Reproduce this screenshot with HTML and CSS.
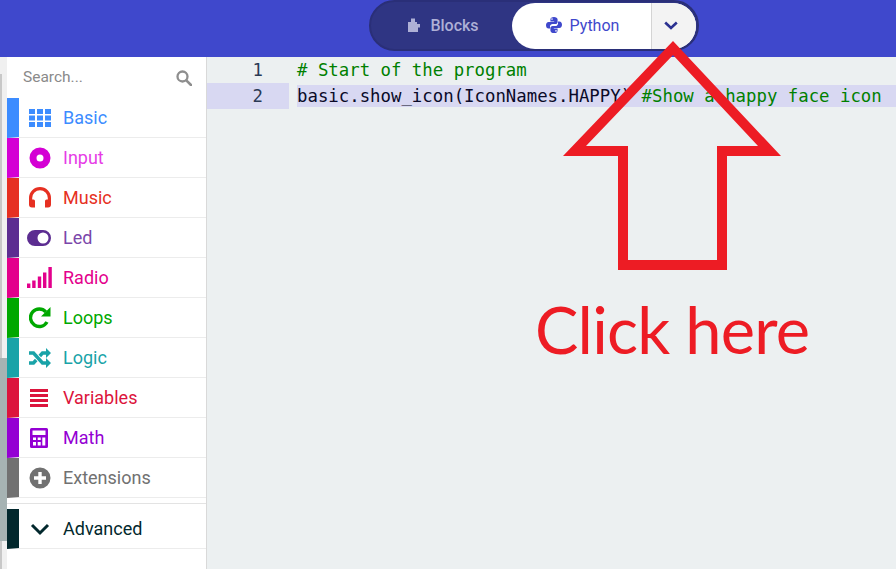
FILE: index.html
```html
<!DOCTYPE html>
<html lang="en">
<head>
<meta charset="utf-8">
<title>MakeCode Python</title>
<link rel="stylesheet" href="styles.css">
</head>
<body>
<header class="topbar">
  <div class="toggle">
    <div class="tab tab-blocks">
      <svg class="tab-icon" viewBox="0 0 12 14"><path d="M3 0.500h4v3.500h2V6H12v3.500h-2V14H0V4h3z" fill="currentColor"/></svg>
      <span>Blocks</span>
    </div>
    <div class="active-group">
      <div class="tab tab-python">
        <svg class="tab-icon" viewBox="0 0 16 16"><path d="M8 0C5.500 0 4.400 1 4.400 2.600V4.500H8.200V5H2.600C1 5 0 6.300 0 8.200c0 2 1 3.300 2.600 3.300H4V9.600c0-1.500 1.200-2.600 2.600-2.600h2.900c1.200 0 2.100-1 2.100-2.100V2.600C11.600 1 10 0 8 0zM6 1.300a.8.8 0 1 1 0 1.600.8.8 0 0 1 0-1.600z" fill="currentColor"/><path d="M8 16c2.500 0 3.600-1 3.600-2.600v-1.900H7.800V11h5.600C15 11 16 9.700 16 7.800c0-2-1-3.300-2.600-3.300H12v1.900c0 1.500-1.200 2.600-2.600 2.600H6.500c-1.200 0-2.100 1-2.100 2.100v2.300C4.400 15 6 16 8 16zm2-1.300a.8.8 0 1 1 0-1.600.8.8 0 0 1 0 1.600z" fill="currentColor"/></svg>
        <span>Python</span>
      </div>
      <div class="tab-menu">
        <svg class="chevron" viewBox="0 0 14 9"><path d="M1.200 1.500 7 7l5.800-5.500" fill="none" stroke="currentColor" stroke-width="2.600"/></svg>
      </div>
    </div>
  </div>
</header>
<main class="workspace">
  <div class="gutter"></div>
  <aside class="toolbox">
    <div class="search">
      <span>Search...</span>
      <svg class="search-icon" viewBox="0 0 16 16"><circle cx="6.500" cy="6.500" r="5" fill="none" stroke="currentColor" stroke-width="2.300"/><path d="m10.300 10.300 4.700 4.700" stroke="currentColor" stroke-width="2.600" stroke-linecap="round"/></svg>
    </div>
    <ul class="cats">
      <li class="cat basic"><svg viewBox="0 0 22 18"><path d="M0 0h6v5H0zM8 0h6v5H8zM16 0h6v5h-6zM0 6.500h6v5H0zM8 6.500h6v5H8zM16 6.500h6v5h-6zM0 13h6v5H0zM8 13h6v5H8zM16 13h6v5h-6z" fill="currentColor"/></svg><span>Basic</span></li>
      <li class="cat input"><svg viewBox="0 0 22 22"><path fill-rule="evenodd" d="M11 0.500a10.500 10.500 0 1 1 0 21 10.500 10.500 0 0 1 0-21zm0 7a3.500 3.500 0 1 0 0 7 3.500 3.500 0 0 0 0-7z" fill="currentColor"/></svg><span>Input</span></li>
      <li class="cat music"><svg viewBox="0 0 22 22"><path d="M0 17v-6a11 11 0 0 1 22 0v6h-3.200v-6a7.800 7.800 0 0 0-15.600 0v6z" fill="currentColor"/><path d="M0 12.500h4.500a1.500 1.500 0 0 1 1.500 1.500V20.500H3a3 3 0 0 1-3-3zM22 12.500h-4.500a1.500 1.500 0 0 0-1.500 1.500V20.500h3a3 3 0 0 0 3-3z" fill="currentColor"/></svg><span>Music</span></li>
      <li class="cat led"><svg viewBox="0 0 24 16"><path fill-rule="evenodd" d="M8 0h8a8 8 0 0 1 0 16H8A8 8 0 0 1 8 0zm8 2.500a5.500 5.500 0 1 0 0 11 5.500 5.500 0 0 0 0-11z" fill="currentColor"/></svg><span>Led</span></li>
      <li class="cat radio"><svg viewBox="0 0 25 21"><path d="M0 16.500h3.400V21H0zM5.200 13.500h3.400V21H5.200zM10.800 9.500h3.400V21h-3.400zM16 5.500h3.400V21H16zM21.400 0h3.400v21h-3.400z" fill="currentColor"/></svg><span>Radio</span></li>
      <li class="cat loops"><svg viewBox="0 0 22 22"><path d="M18 15A8.800 8.800 0 1 1 16.800 4.800" fill="none" stroke="currentColor" stroke-width="3.400"/><path d="M21.500 0v9.500H12z" fill="currentColor"/></svg><span>Loops</span></li>
      <li class="cat logic"><svg viewBox="0 0 22 20"><path d="M0 5h4.500l9 10H18M0 15h4.500l2.700-3M10.800 8l2.700-3H18" fill="none" stroke="currentColor" stroke-width="3.400"/><path d="M17 0l5 5-5 5zM17 10l5 5-5 5z" fill="currentColor"/></svg><span>Logic</span></li>
      <li class="cat variables"><svg viewBox="0 0 18 18"><path d="M0 0h18v3H0zM0 5h18v3H0zM0 10h18v3H0zM0 15h18v3H0z" fill="currentColor"/></svg><span>Variables</span></li>
      <li class="cat math"><svg viewBox="0 0 18 20"><path fill-rule="evenodd" d="M1.500 0h15A1.500 1.500 0 0 1 18 1.500v17a1.500 1.500 0 0 1-1.500 1.500h-15A1.500 1.500 0 0 1 0 18.500v-17A1.500 1.500 0 0 1 1.500 0zM2.500 2.500V7h13V2.500zM3 9.500V12h3V9.500zM7.700 9.500V12h3V9.500zM12.300 9.500V17.500h3V9.500zM3 14v3.500h3V14zM7.700 14v3.500h3V14z" fill="currentColor"/></svg><span>Math</span></li>
      <li class="cat extensions"><svg viewBox="0 0 22 22"><path fill-rule="evenodd" d="M11 0.500a10.500 10.500 0 1 1 0 21 10.500 10.500 0 0 1 0-21zM9.300 5V9.300H5v3.400h4.300V17h3.400v-4.300H17V9.300h-4.300V5z" fill="currentColor"/></svg><span>Extensions</span></li>
    </ul>
    <div class="cat advanced"><svg viewBox="0 0 22 22"><path d="M3 7 11 15l8-8" fill="none" stroke="currentColor" stroke-width="3"/></svg><span>Advanced</span></div>
  </aside>
  <section class="editor">
    <div class="code-line">
      <div class="line-num">1</div>
      <div class="code"><span class="comment"># Start of the program</span></div>
    </div>
    <div class="code-line current">
      <div class="line-num">2</div>
      <div class="code">basic.show_icon(IconNames.HAPPY) <span class="comment">#Show a happy face icon</span></div>
    </div>
  </section>
</main>
<svg class="annotation-arrow" viewBox="0 0 896 569"><path fill-rule="evenodd" d="M673 41 781 156H727V270H618V156H563zM673 55 586 146H628V260H717V146H758z" fill="#ed1c24"/></svg>
<div class="annotation-text">Click here</div>
</body>
</html>
```
FILE: styles.css
```css
* { box-sizing: border-box; }
html, body { margin: 0; height: 100%; }
body {
  width: 896px;
  height: 569px;
  overflow: hidden;
  position: relative;
  display: flex;
  flex-direction: column;
  font-family: Roboto, "Liberation Sans", sans-serif;
  background: #ecf0f1;
}
.topbar {
  height: 57px;
  flex: none;
  background: #3f48cc;
  position: relative;
  display: flex;
}
.toggle {
  position: absolute;
  left: 369px;
  top: 0;
  width: 330px;
  height: 51px;
  border-radius: 26px;
  background: #2f3583;
  border: 2px solid #2a2f78;
  display: flex;
  align-items: center;
  padding: 0 1px 0 0;
}
.tab {
  display: flex;
  align-items: center;
  justify-content: center;
  font-size: 16px;
  padding-bottom: 1px;
}
.tab-blocks {
  width: 141px;
  gap: 10px;
  padding-left: 4px;
  color: #aeb0d6;
  font-weight: 500;
}
.tab-blocks .tab-icon { width: 12px; height: 14px; }
.active-group {
  flex: 1;
  height: 46px;
  display: flex;
  border-radius: 23px;
  background: #fff;
  overflow: hidden;
}
.tab-python {
  flex: 1;
  gap: 8px;
  color: #3f48cc;
  padding-left: 2px;
}
.tab-python .tab-icon { width: 16px; height: 16px; }
.tab-menu {
  width: 45px;
  background: #f3f3f3;
  border-left: 1px solid #d4d4d4;
  display: flex;
  align-items: center;
  justify-content: center;
  color: #2c3291;
  padding-right: 7px;
}
.chevron { width: 14px; height: 9px; }
.workspace {
  flex: 1;
  display: flex;
  min-height: 0;
}
.gutter {
  width: 7px;
  flex: none;
  background:
    linear-gradient(#a6b3b3, #a6b3b3) 0 301px / 100% 183px no-repeat,
    linear-gradient(#c8c8c8, #c8c8c8) 0 17px / 2px 100% no-repeat,
    #f0f0f0;
}
.toolbox {
  width: 200px;
  flex: none;
  background: #fff;
  border-right: 1px solid #d9d9d9;
  display: flex;
  flex-direction: column;
}
.search {
  height: 41px;
  flex: none;
  display: flex;
  align-items: center;
  justify-content: space-between;
  padding: 0 14px 0 16px;
  color: #8a8a8a;
  font-size: 15.500px;
}
.search span { padding-bottom: 2px; }
.search-icon { width: 16px; height: 16px; color: #8e8e8e; }
.cats { list-style: none; margin: 0; padding: 0 0 5px; border-bottom: 1px solid #e3e3e3; }
.cat {
  height: 40px;
  display: flex;
  align-items: center;
  border-left: 12px solid currentColor;
  border-bottom: 1px solid #ececec;
  padding-left: 10px;
  font-size: 18px;
}
.cat svg { width: 22px; height: 22px; flex: none; }
.cat span { margin-left: 12px; }
.basic { color: #3c8cff; }
.input { color: #d400d4; }
.input span { color: #e63ce6; }
.music { color: #e63022; }
.led { color: #5c2d91; }
.led span { color: #7b46aa; }
.led svg { width: 24px; height: 16px; margin-left: -2px; }
.radio { color: #e3008c; }
.radio svg { width: 25px; height: 21px; margin: 0 -1px 0 -2px; }
.loops { color: #00a800; }
.logic { color: #19a3a8; }
.variables { color: #dc143c; }
.variables svg { width: 18px; height: 18px; margin: 0 3px 0 1px; }
.math { color: #9400d3; }
.math svg { width: 18px; height: 20px; margin: 0 3px 0 1px; }
.extensions { color: #717171; }
.advanced { color: #02282d; margin-top: 5px; }
.editor {
  flex: 1;
  font-family: "DejaVu Sans Mono", monospace;
  font-size: 17.350px;
  color: #0a0a28;
  min-width: 0;
}
.code-line {
  height: 26px;
  display: flex;
  align-items: center;
  white-space: pre;
}
.line-num {
  width: 82px;
  flex: none;
  height: 26px;
  line-height: 26px;
  padding-right: 26px;
  text-align: right;
  color: #2b3a55;
}
.code { margin-left: 8px; flex: 1; height: 22px; line-height: 22px; }
.current .line-num { background: #d8d8f2; }
.current .code { background: #d8d8f2; }
.comment { color: #008000; }
.annotation-arrow {
  position: absolute;
  left: 0;
  top: 0;
  width: 896px;
  height: 569px;
  pointer-events: none;
}
.annotation-text {
  position: absolute;
  left: 535px;
  top: 289px;
  font-family: Lato, sans-serif;
  font-size: 65px;
  letter-spacing: -0.800px;
  line-height: 80px;
  color: #ed1c24;
  white-space: nowrap;
}
```
